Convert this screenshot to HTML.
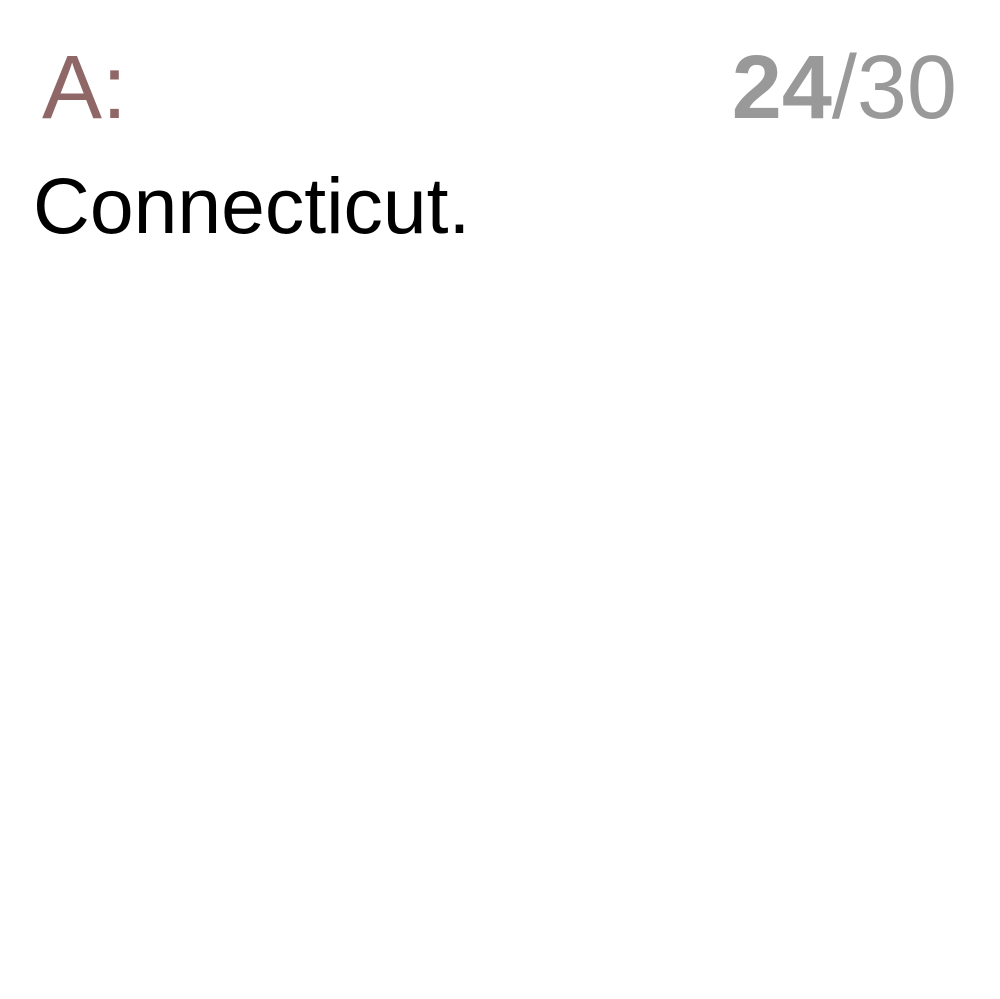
<!DOCTYPE html>
<html><head><style>
html,body{margin:0;padding:0;background:#fff;width:1000px;height:999px;overflow:hidden;font-family:"Liberation Sans",Arial,sans-serif;}
.a{position:absolute;left:42px;top:38px;font-size:90px;line-height:100px;color:#8f6767;}
.n{position:absolute;right:43px;top:38px;font-size:90px;line-height:100px;color:#999;}
.n b{font-weight:bold;}
.c{position:absolute;left:33px;top:161px;font-size:78.7px;line-height:90px;color:#000;}
</style></head><body>
<div class="a">A:</div>
<div class="n"><b>24</b>/30</div>
<div class="c">Connecticut.</div>
</body></html>
